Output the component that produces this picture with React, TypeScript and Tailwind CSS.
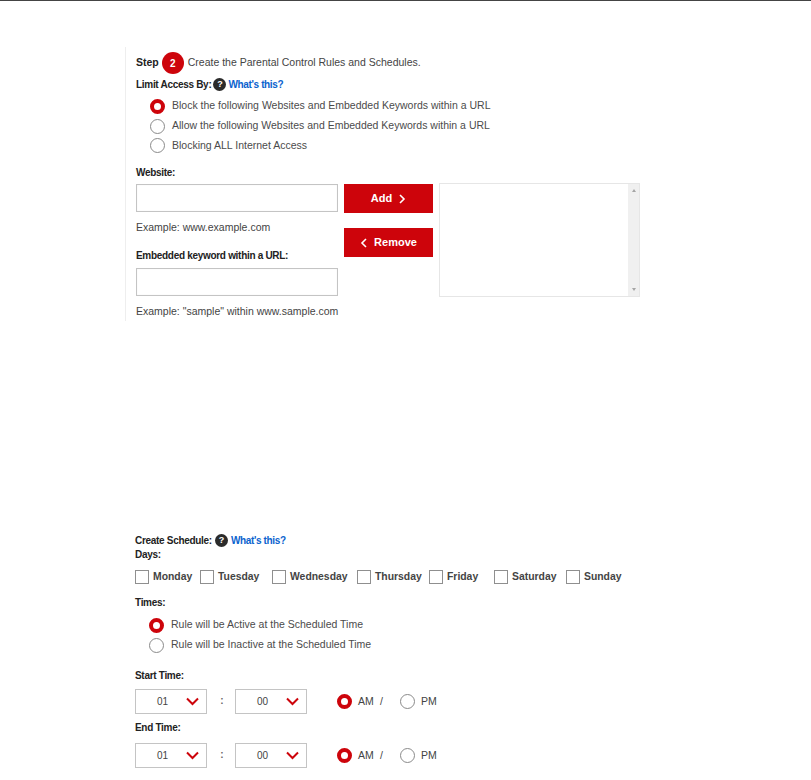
import type { ReactNode } from "react";

const font = "font-['Liberation_Sans',Arial,sans-serif]";

function Radio({ on }: { on?: boolean }) {
  if (on) {
    return <span className="block h-[15px] w-[15px] shrink-0 rounded-full border-[4px] border-[#cd040b] bg-white" />;
  }
  return <span className="block h-[15px] w-[15px] shrink-0 rounded-full border-[1.5px] border-[#8a8a8a] bg-white" />;
}

function RadioRow({ on, children, className }: { on?: boolean; children: ReactNode; className: string }) {
  return (
    <div className={`flex items-center gap-[7px] text-[10.5px] text-[#4b4b4b] ${className}`}>
      <Radio on={on} />
      <span className="whitespace-nowrap">{children}</span>
    </div>
  );
}

function Label({ children, className = "" }: { children: ReactNode; className?: string }) {
  return <div className={`whitespace-nowrap text-[10px] font-bold tracking-[-0.3px] text-[#222] ${className}`}>{children}</div>;
}

function Help() {
  return (
    <span className="flex h-[13px] w-[13px] items-center justify-center rounded-full bg-[#2b2b2b] text-[9px] font-bold leading-none text-white">
      ?
    </span>
  );
}

function WhatsThis() {
  return <a className="whitespace-nowrap text-[10px] font-bold tracking-[-0.35px] text-[#0b63ce]">What's this?</a>;
}

function TextBox() {
  return <div className="h-[28px] w-[202px] border border-[#c4c4c4] bg-white shadow-[inset_0_0_1px_#ddd]" />;
}

function RedButton({ children }: { children: ReactNode }) {
  return (
    <button className="flex h-[29px] w-[89px] items-center justify-center gap-[7px] bg-[#cd040b] text-[11px] font-bold text-white">
      {children}
    </button>
  );
}

function Chevron({ left }: { left?: boolean }) {
  return (
    <svg width="7" height="10" viewBox="0 0 7 10" fill="none" stroke="#fff" strokeWidth="1.6">
      <path d={left ? "M6 1 2 5l4 4" : "M1 1l4 4-4 4"} />
    </svg>
  );
}

function Select({ value }: { value: string }) {
  return (
    <div className="flex h-[25px] w-[72px] items-center border border-[#c4c4c4] bg-white pl-[21px] text-[10px] text-[#444]">
      <span className="w-[29px]">{value}</span>
      <svg width="13" height="9" viewBox="0 0 13 9" fill="none" stroke="#cd040b" strokeWidth="2">
        <path d="M1 1.5 6.5 7 12 1.5" />
      </svg>
    </div>
  );
}

function TimeRow() {
  return (
    <div className="flex h-[25px] items-center text-[10.5px] text-[#444]">
      <Select value="01" />
      <span className="w-[28px] pb-[2px] pl-[2px] text-center text-[10px] font-bold text-[#666]">:</span>
      <Select value="00" />
      <span className="ml-[30px]"><Radio on /></span>
      <span className="ml-[6px] w-[22px]">AM</span>
      <span className="w-[20px]">/</span>
      <Radio />
      <span className="ml-[6px]">PM</span>
    </div>
  );
}

const days = [
  { name: "Monday", w: "w-[65px]" },
  { name: "Tuesday", w: "w-[72px]" },
  { name: "Wednesday", w: "w-[85px]" },
  { name: "Thursday", w: "w-[72px]" },
  { name: "Friday", w: "w-[65px]" },
  { name: "Saturday", w: "w-[72px]" },
  { name: "Sunday", w: "w-[72px]" },
];

export default function App() {
  return (
    <div className={`h-[780px] w-[811px] overflow-hidden border-t border-[#444] bg-white ${font}`}>
      <section className="ml-[125px] mt-[46px] h-[274px] w-[520px] border-l border-[#eee] pl-[10px]">
        <div className="flex h-[29px] items-center pt-[3px]">
          <span className="text-[10.5px] font-bold text-[#222]">Step</span>
          <span className="ml-[3px] flex h-[22px] w-[22px] items-center justify-center rounded-full bg-[#cd040b] text-[10px] font-bold text-white">2</span>
          <span className="ml-[4px] whitespace-nowrap text-[10.5px] text-[#444]">Create the Parental Control Rules and Schedules.</span>
        </div>
        <div className="flex h-[16px] items-center gap-[2px]">
          <Label>Limit Access By:</Label>
          <Help />
          <span className="flex"><WhatsThis /></span>
        </div>
        <RadioRow on className="ml-[14px] mt-[4px] h-[20px]">Block the following Websites and Embedded Keywords within a URL</RadioRow>
        <RadioRow className="ml-[14px] h-[20px]">Allow the following Websites and Embedded Keywords within a URL</RadioRow>
        <RadioRow className="ml-[14px] h-[19px]">Blocking ALL Internet Access</RadioRow>
        <Label className="mt-[12px] h-[12px] leading-[12px]">Website:</Label>
        <div className="mt-[5px] flex">
          <div className="w-[202px]">
            <TextBox />
            <div className="mt-[8px] whitespace-nowrap text-[10.5px] leading-[14px] text-[#444]">Example: www.example.com</div>
            <Label className="mt-[16px] h-[12px] leading-[12px]">Embedded keyword within a URL:</Label>
            <div className="mt-[6px]"><TextBox /></div>
            <div className="mt-[8px] whitespace-nowrap text-[10.5px] leading-[14px] text-[#444]">Example: "sample" within www.sample.com</div>
          </div>
          <div className="ml-[6px] flex w-[89px] flex-col gap-[15px]">
            <RedButton>Add <Chevron /></RedButton>
            <RedButton><Chevron left /> Remove</RedButton>
          </div>
          <div className="-mt-[1px] ml-[6px] flex h-[114px] w-[201px] justify-end border border-[#e6e6e6] bg-white">
            <div className="flex w-[11px] flex-col items-center justify-between bg-[#f0f0f0] py-[5px]">
              <span className="h-0 w-0 border-x-[2.5px] border-b-[3px] border-x-transparent border-b-[#a5a5a5]" />
              <span className="h-0 w-0 border-x-[2.5px] border-t-[3px] border-x-transparent border-t-[#a5a5a5]" />
            </div>
          </div>
        </div>
      </section>

      <section className="ml-[135px] mt-[212px]">
        <div className="flex h-[15px] items-center gap-[3px]">
          <Label>Create Schedule:</Label>
          <Help />
          <span className="flex"><WhatsThis /></span>
        </div>
        <Label className="h-[14px] leading-[14px]">Days:</Label>
        <div className="mt-[7px] flex h-[16px] items-center">
          {days.map((day) => (
            <div key={day.name} className={`flex items-center gap-[4px] ${day.w}`}>
              <span className="h-[14px] w-[14px] shrink-0 border border-[#8f8f8f] bg-white" />
              <span className="text-[10.4px] font-bold text-[#444]">{day.name}</span>
            </div>
          ))}
        </div>
        <Label className="mt-[12px] h-[12px] leading-[12px]">Times:</Label>
        <RadioRow on className="ml-[14px] mt-[6px] h-[20px]">Rule will be Active at the Scheduled Time</RadioRow>
        <RadioRow className="ml-[14px] h-[20px]">Rule will be Inactive at the Scheduled Time</RadioRow>
        <Label className="mt-[15px] h-[12px] leading-[12px]">Start Time:</Label>
        <div className="mt-[7px]"><TimeRow /></div>
        <Label className="mt-[8px] h-[12px] leading-[12px]">End Time:</Label>
        <div className="mt-[9px]"><TimeRow /></div>
      </section>
    </div>
  );
}
